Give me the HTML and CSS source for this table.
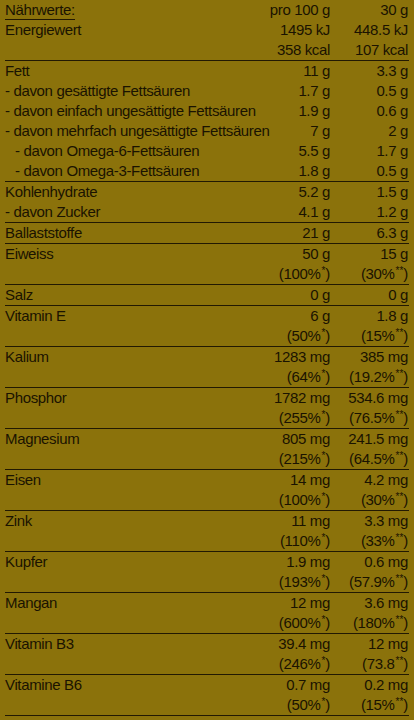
FILE: index.html
```html
<!DOCTYPE html>
<html lang="de">
<head>
<meta charset="utf-8">
<title>Nährwerte</title>
<link rel="stylesheet" href="styles.css">
</head>
<body>
<div class="table">
  <div class="group head">
    <div class="row"><span class="label"><span class="ul">Nährwerte:</span></span><span class="v">pro 100 g</span><span class="v v3">30 g</span></div>
  </div>
  <div class="group">
    <div class="row"><span class="label">Energiewert</span><span class="v">1495 kJ</span><span class="v v3">448.5 kJ</span></div>
    <div class="row"><span class="label"></span><span class="v">358 kcal</span><span class="v v3">107 kcal</span></div>
  </div>
  <div class="group">
    <div class="row"><span class="label">Fett</span><span class="v">11 g</span><span class="v v3">3.3 g</span></div>
    <div class="row"><span class="label">- davon gesättigte Fettsäuren</span><span class="v">1.7 g</span><span class="v v3">0.5 g</span></div>
    <div class="row"><span class="label">- davon einfach ungesättigte Fettsäuren</span><span class="v">1.9 g</span><span class="v v3">0.6 g</span></div>
    <div class="row"><span class="label">- davon mehrfach ungesättigte Fettsäuren</span><span class="v">7 g</span><span class="v v3">2 g</span></div>
    <div class="row"><span class="label sub">- davon Omega-6-Fettsäuren</span><span class="v">5.5 g</span><span class="v v3">1.7 g</span></div>
    <div class="row"><span class="label sub">- davon Omega-3-Fettsäuren</span><span class="v">1.8 g</span><span class="v v3">0.5 g</span></div>
  </div>
  <div class="group">
    <div class="row"><span class="label">Kohlenhydrate</span><span class="v">5.2 g</span><span class="v v3">1.5 g</span></div>
    <div class="row"><span class="label">- davon Zucker</span><span class="v">4.1 g</span><span class="v v3">1.2 g</span></div>
  </div>
  <div class="group">
    <div class="row"><span class="label">Ballaststoffe</span><span class="v">21 g</span><span class="v v3">6.3 g</span></div>
  </div>
  <div class="group">
    <div class="row"><span class="label">Eiweiss</span><span class="v">50 g</span><span class="v v3">15 g</span></div>
    <div class="row"><span class="label"></span><span class="v">(100%<span class="sup">*</span>)</span><span class="v v3">(30%<span class="sup">**</span>)</span></div>
  </div>
  <div class="group">
    <div class="row"><span class="label">Salz</span><span class="v">0 g</span><span class="v v3">0 g</span></div>
  </div>
  <div class="group">
    <div class="row"><span class="label">Vitamin E</span><span class="v">6 g</span><span class="v v3">1.8 g</span></div>
    <div class="row"><span class="label"></span><span class="v">(50%<span class="sup">*</span>)</span><span class="v v3">(15%<span class="sup">**</span>)</span></div>
  </div>
  <div class="group">
    <div class="row"><span class="label">Kalium</span><span class="v">1283 mg</span><span class="v v3">385 mg</span></div>
    <div class="row"><span class="label"></span><span class="v">(64%<span class="sup">*</span>)</span><span class="v v3">(19.2%<span class="sup">**</span>)</span></div>
  </div>
  <div class="group">
    <div class="row"><span class="label">Phosphor</span><span class="v">1782 mg</span><span class="v v3">534.6 mg</span></div>
    <div class="row"><span class="label"></span><span class="v">(255%<span class="sup">*</span>)</span><span class="v v3">(76.5%<span class="sup">**</span>)</span></div>
  </div>
  <div class="group">
    <div class="row"><span class="label">Magnesium</span><span class="v">805 mg</span><span class="v v3">241.5 mg</span></div>
    <div class="row"><span class="label"></span><span class="v">(215%<span class="sup">*</span>)</span><span class="v v3">(64.5%<span class="sup">**</span>)</span></div>
  </div>
  <div class="group">
    <div class="row"><span class="label">Eisen</span><span class="v">14 mg</span><span class="v v3">4.2 mg</span></div>
    <div class="row"><span class="label"></span><span class="v">(100%<span class="sup">*</span>)</span><span class="v v3">(30%<span class="sup">**</span>)</span></div>
  </div>
  <div class="group">
    <div class="row"><span class="label">Zink</span><span class="v">11 mg</span><span class="v v3">3.3 mg</span></div>
    <div class="row"><span class="label"></span><span class="v">(110%<span class="sup">*</span>)</span><span class="v v3">(33%<span class="sup">**</span>)</span></div>
  </div>
  <div class="group">
    <div class="row"><span class="label">Kupfer</span><span class="v">1.9 mg</span><span class="v v3">0.6 mg</span></div>
    <div class="row"><span class="label"></span><span class="v">(193%<span class="sup">*</span>)</span><span class="v v3">(57.9%<span class="sup">**</span>)</span></div>
  </div>
  <div class="group">
    <div class="row"><span class="label">Mangan</span><span class="v">12 mg</span><span class="v v3">3.6 mg</span></div>
    <div class="row"><span class="label"></span><span class="v">(600%<span class="sup">*</span>)</span><span class="v v3">(180%<span class="sup">**</span>)</span></div>
  </div>
  <div class="group">
    <div class="row"><span class="label">Vitamin B3</span><span class="v">39.4 mg</span><span class="v v3">12 mg</span></div>
    <div class="row"><span class="label"></span><span class="v">(246%<span class="sup">*</span>)</span><span class="v v3">(73.8<span class="sup">**</span>)</span></div>
  </div>
  <div class="group">
    <div class="row"><span class="label">Vitamine B6</span><span class="v">0.7 mg</span><span class="v v3">0.2 mg</span></div>
    <div class="row"><span class="label"></span><span class="v">(50%<span class="sup">*</span>)</span><span class="v v3">(15%<span class="sup">**</span>)</span></div>
  </div>
</div>
</body>
</html>
```

FILE: styles.css
```css
html, body {
  margin: 0;
  padding: 0;
  background: #8b720b;
}

body {
  font-family: "Liberation Sans", Arial, sans-serif;
  font-size: 15px;
  letter-spacing: -0.35px;
  color: #1a1301;
}

.table {
  width: 404px;
  margin-left: 5px;
}

.group {
  border-bottom: 1px solid #221902;
}

.group.head {
  border-bottom: none;
}

.row {
  display: grid;
  grid-template-columns: 235px 90px 79px;
  height: 20px;
  line-height: 20px;
  white-space: nowrap;
}

.label.sub {
  padding-left: 10px;
}

.ul {
  display: inline-block;
  height: 20px;
  box-sizing: border-box;
  border-bottom: 1px solid #221902;
  line-height: 20px;
}

.v {
  text-align: right;
}

.v3 {
  padding-right: 1px;
}

.sup {
  font-size: 10px;
  line-height: 0;
  margin-left: 1px;
  letter-spacing: 0;
  vertical-align: 5px;
}
```
